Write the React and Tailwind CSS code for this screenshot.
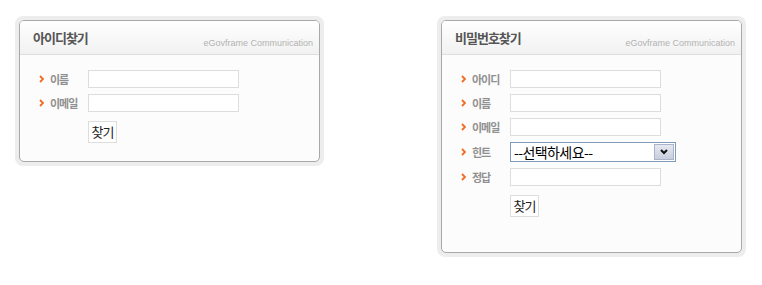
import React from 'react';

const Bullet = () => (
  <svg width="5" height="8" viewBox="0 0 5 8" className="shrink-0">
    <polyline points="1,1 4,4 1,7" fill="none" stroke="#f26a21" strokeWidth="1.8" />
  </svg>
);

const Label = ({ text }) => (
  <div className="w-[49px] pl-[19px] flex items-center gap-[6px]">
    <Bullet />
    <span className="text-[11px] font-bold text-[#909090] tracking-[-1px] whitespace-nowrap leading-none">
      {text}
    </span>
  </div>
);

const Field = ({ label, children }) => (
  <div className="flex items-center h-[18px]">
    <Label text={label} />
    {children}
  </div>
);

const TextInput = () => (
  <input type="text" className="ml-[19px] w-[151px] h-[18px] border border-[#dddddd] bg-white outline-none" />
);

const HintSelect = () => (
  <div className="ml-[19px] w-[166px] h-[20px] border border-[#7f9db9] bg-white flex items-center justify-between">
    <span className="pl-[3px] text-[14px] text-black leading-none tracking-[-0.6px] whitespace-nowrap">--선택하세요--</span>
    <div className="w-[20px] h-[16px] mr-[1px] border border-[#a9b3c9] bg-gradient-to-b from-[#e6e9f2] to-[#c9cedd] flex items-center justify-center">
      <svg width="8" height="6" viewBox="0 0 8 6">
        <polyline points="1,1 4,4 7,1" fill="none" stroke="#111" strokeWidth="2" />
      </svg>
    </div>
  </div>
);

const Panel = ({ title, children }) => (
  <div className="p-[4px] rounded-[8px] bg-[#ededed]">
    <div className="w-[301px] rounded-[5px] border border-[#a9a9a9] bg-[#fcfcfc] overflow-hidden">
      <div className="h-[34px] flex items-end justify-between border-b border-[#dedede] bg-gradient-to-b from-white to-[#f1f1f1] pl-[13px] pr-[6px]">
        <span className="mb-[10px] text-[13px] font-bold text-[#555555] tracking-[-1px] leading-none whitespace-nowrap">
          {title}
        </span>
        <span className="mb-[6px] text-[9px] text-[#b3b3b3] leading-none whitespace-nowrap" style={{ fontFamily: '"Liberation Sans", Arial, sans-serif' }}>
          eGovframe Communication
        </span>
      </div>
      {children}
    </div>
  </div>
);

const SearchButton = () => (
  <button className="ml-[68px] mt-[2px] w-[29px] h-[22px] border border-[#dddddd] bg-white text-[13px] text-[#222222] leading-none tracking-[-1px]">
    찾기
  </button>
);

export default function App() {
  return (
    <div className="w-[762px] h-[285px] bg-white flex items-start gap-[113px] pl-[15px] pt-[16px]" style={{ fontFamily: '"Noto Sans CJK KR", sans-serif' }}>
      <Panel title="아이디찾기">
        <div className="flex flex-col gap-[6px] pt-[15px] pb-[18px]">
          <Field label="이름"><TextInput /></Field>
          <Field label="이메일"><TextInput /></Field>
          <div><SearchButton /></div>
        </div>
      </Panel>
      <Panel title="비밀번호찾기">
        <div className="flex flex-col gap-[6px] pt-[15px] pb-[35px]">
          <Field label="아이디"><TextInput /></Field>
          <Field label="이름"><TextInput /></Field>
          <Field label="이메일"><TextInput /></Field>
          <div className="flex items-center h-[20px]">
            <Label text="힌트" />
            <HintSelect />
          </div>
          <Field label="정답"><TextInput /></Field>
          <div><SearchButton /></div>
        </div>
      </Panel>
    </div>
  );
}
